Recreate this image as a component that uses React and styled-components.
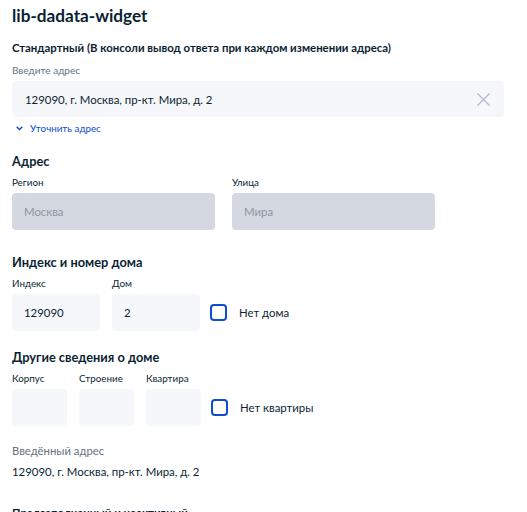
import React, { useState } from 'react';
import styled, { createGlobalStyle } from 'styled-components';

// ######################### Styling  ################################

const GlobalStyle = createGlobalStyle`
  body {
    margin: 0;
    font-family: Lato, "Noto Sans", sans-serif;
    color: #0b1f33;
    background: #fff;
  }
`;

const Page = styled.div`
  padding: 4px 23px 0 12px;
  display: flex;
  flex-direction: column;
`;

const Title = styled.h1`
  margin: 0;
  font-size: 17.2px;
  line-height: 24px;
  font-weight: 700;
`;

const Subtitle = styled.h2`
  margin: ${p => p.$top || 10}px 0 0;
  font-size: 11.4px;
  line-height: 20px;
  font-weight: 700;
`;

const SectionTitle = styled.h3`
  margin: ${p => p.$top}px 0 0;
  font-size: 12.8px;
  line-height: 20px;
  font-weight: 700;
`;

const Label = styled.div`
  margin-top: ${p => p.$top || 3}px;
  font-size: ${p => p.$size || 9.8}px;
  line-height: 16px;
  color: ${p => (p.$muted ? '#66727f' : '#0b1f33')};
`;

const Field = styled.div`
  display: flex;
  flex-direction: column;
  width: ${p => p.$width}px;
`;

const InputBox = styled.div`
  margin-top: 3px;
  height: ${p => p.$height || 37}px;
  border-radius: 4px;
  background: ${p => (p.$disabled ? '#d4d8e1' : '#f5f7fa')};
  display: flex;
  align-items: center;
  padding: 0 14px 0 ${p => p.$pad || 12}px;
  box-sizing: border-box;
`;

const Input = styled.input`
  flex: 1;
  min-width: 0;
  border: none;
  outline: none;
  background: transparent;
  font-family: inherit;
  font-size: 11.4px;
  color: ${p => (p.disabled ? '#8e95a3' : '#0b1f33')};
  padding: 0;
`;

const ClearButton = styled.button`
  border: none;
  background: none;
  padding: 0;
  width: 13px;
  height: 13px;
  display: flex;
  cursor: pointer;
`;

const Toggle = styled.div`
  margin-top: 3px;
  display: flex;
  align-items: center;
  gap: 7px;
  padding-left: 4px;
  font-size: 9.8px;
  line-height: 16px;
  color: #0d4cd3;
  cursor: pointer;
`;

const Row = styled.div`
  display: flex;
  align-items: flex-start;
  gap: ${p => p.$gap || 12}px;
`;

const CheckLabel = styled.label`
  display: flex;
  align-items: center;
  gap: 12px;
  margin-left: -2px;
  align-self: flex-end;
  height: 37px;
  font-size: 11.4px;
  cursor: pointer;
`;

const Box = styled.span`
  width: 17px;
  height: 17px;
  box-sizing: border-box;
  border: 2px solid #0d4cd3;
  border-radius: 4px;
  background: ${p => (p.$checked ? '#0d4cd3' : '#fff')};
`;

const Value = styled.div`
  margin-top: 5px;
  font-size: 11.4px;
  line-height: 16px;
`;

//############################# Component ################################

const Checkbox = ({ label }) => {
    const [checked, setChecked] = useState(false);
    return <CheckLabel onClick={() => setChecked(!checked)}>
        <Box $checked={checked} />
        {label}
    </CheckLabel>
};

const TextField = ({ label, width, value, disabled }) => (
    <Field $width={width}>
        <Label>{label}</Label>
        <InputBox $disabled={disabled}>
            <Input defaultValue={value} disabled={disabled} />
        </InputBox>
    </Field>
);

const App = () => {
    const [address, setAddress] = useState('129090, г. Москва, пр-кт. Мира, д. 2');

    return <>
        <GlobalStyle />
        <Page>
            <Title>lib-dadata-widget</Title>
            <Subtitle>Стандартный (В консоли вывод ответа при каждом изменении адреса)</Subtitle>
            <Label $top={4} $size={10} $muted>Введите адрес</Label>
            <InputBox $height={36} $pad={13}>
                <Input value={address} onChange={e => setAddress(e.currentTarget.value)} />
                <ClearButton onClick={() => setAddress('')}>
                    <svg width="13" height="13" viewBox="0 0 13 13" fill="none" stroke="#b3bcca" strokeWidth="1.3">
                        <path d="M0.5 0.5 L12.5 12.5 M12.5 0.5 L0.5 12.5" />
                    </svg>
                </ClearButton>
            </InputBox>
            <Toggle>
                <svg width="7" height="5" viewBox="0 0 7 5" fill="none" stroke="#0d4cd3" strokeWidth="1.4">
                    <path d="M0.7 0.8 L3.5 3.6 L6.3 0.8" />
                </svg>
                Уточнить адрес
            </Toggle>

            <SectionTitle $top={15}>Адрес</SectionTitle>
            <Row $gap={17}>
                <TextField label="Регион" width={203} value="Москва" disabled />
                <TextField label="Улица" width={203} value="Мира" disabled />
            </Row>

            <SectionTitle $top={22}>Индекс и номер дома</SectionTitle>
            <Row>
                <TextField label="Индекс" width={88} value="129090" />
                <TextField label="Дом" width={88} value="2" />
                <Checkbox label="Нет дома" />
            </Row>

            <SectionTitle $top={16}>Другие сведения о доме</SectionTitle>
            <Row>
                <TextField label="Корпус" width={55} value="" />
                <TextField label="Строение" width={55} value="" />
                <TextField label="Квартира" width={55} value="" />
                <Checkbox label="Нет квартиры" />
            </Row>

            <Label $top={17} $size={11.3} $muted>Введённый адрес</Label>
            <Value>{address}</Value>

            <Subtitle $top={23}>Предзаполненный и неактивный</Subtitle>
        </Page>
    </>
};

export default App;
